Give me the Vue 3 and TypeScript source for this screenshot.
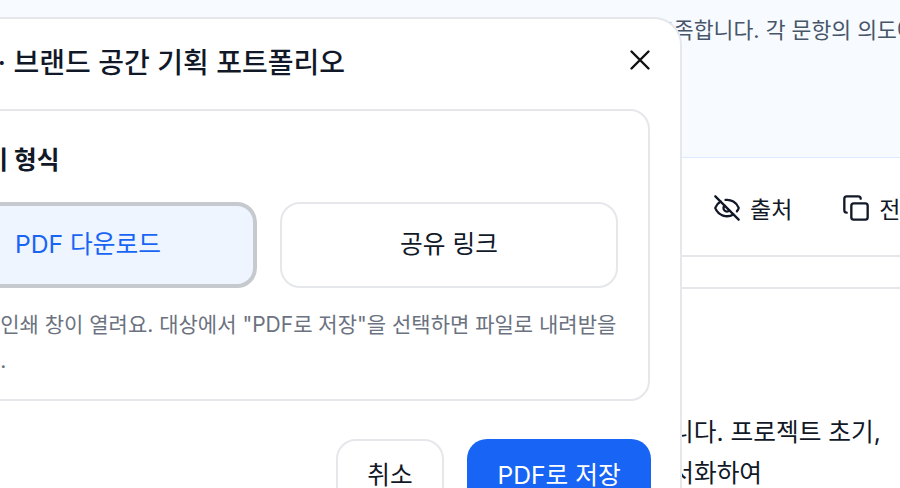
<script setup lang="ts">
const title = '내보내기 · 브랜드 공간 기획 포트폴리오'
const hint = '브라우저 인쇄 창이 열려요. 대상에서 "PDF로 저장"을 선택하면 파일로 내려받을 수 있어요.'
</script>

<template>
  <div class="page">
    <section class="banner">
      <p class="banner-text">충족합니다. 각 문항의 의도에 맞게 작성되었습니다.</p>
    </section>
    <div class="toolbar">
      <button class="tool">
        <svg class="tool-icon" viewBox="0 0 24 24" fill="none" stroke="currentColor" stroke-width="2" stroke-linecap="round" stroke-linejoin="round">
          <path d="M10.733 5.076a10.744 10.744 0 0 1 11.205 6.575 1 1 0 0 1 0 .696 10.747 10.747 0 0 1-1.444 2.49" />
          <path d="M14.084 14.158a3 3 0 0 1-4.242-4.242" />
          <path d="M17.479 17.499a10.75 10.75 0 0 1-15.417-5.151 1 1 0 0 1 0-.696 10.75 10.75 0 0 1 4.446-5.143" />
          <path d="m2 2 20 20" />
        </svg>
        <span>출처</span>
      </button>
      <button class="tool">
        <svg class="tool-icon" viewBox="0 0 24 24" fill="none" stroke="currentColor" stroke-width="2" stroke-linecap="round" stroke-linejoin="round">
          <rect x="8" y="8" width="14" height="14" rx="2" ry="2" />
          <path d="M4 16c-1.100 0-2-.9-2-2V4c0-1.100.9-2 2-2h10c1.100 0 2 .9 2 2" />
        </svg>
        <span>전체 복사</span>
      </button>
    </div>
    <div class="stripe"></div>
    <article class="body-text">
      <p>이 문서는 공간 기획 과정을 정리한 것입니다. 프로젝트 초기,</p>
      <p>브랜드의 핵심 가치를 분석하고, 이를 문서화하여</p>
    </article>

    <div class="modal">
      <header class="modal-head">
        <h2 class="modal-title">{{ title }}</h2>
        <button class="close" aria-label="닫기">
          <svg viewBox="0 0 24 24" fill="none" stroke="currentColor" stroke-width="2.400" stroke-linecap="round">
            <path d="M3.500 3.500l17 17M20.500 3.500l-17 17" />
          </svg>
        </button>
      </header>
      <div class="card">
        <h3 class="card-label">내보내기 형식</h3>
        <div class="choices">
          <button class="choice active">PDF 다운로드</button>
          <button class="choice">공유 링크</button>
        </div>
        <p class="hint">{{ hint }}</p>
      </div>
      <footer class="actions">
        <button class="btn ghost">취소</button>
        <button class="btn primary">PDF로 저장</button>
      </footer>
    </div>
  </div>
</template>

<style>
html,
body {
  margin: 0;
  height: 100%;
  overflow: hidden;
  background: #fff;
}
</style>

<style scoped>
.page {
  position: relative;
  width: 900px;
  height: 488px;
  overflow: hidden;
  font-family: Inter, "Noto Sans CJK KR", sans-serif;
  color: #111827;
}
.banner {
  box-sizing: border-box;
  height: 158px;
  padding: 12px 0 0 654px;
  background: #f7fbff;
  border-bottom: 1px solid #dbeafe;
}
.banner-text {
  margin: 0;
  font-size: 21.6px;
  line-height: 36px;
  color: #475569;
  white-space: nowrap;
}
.toolbar {
  box-sizing: border-box;
  height: 99px;
  display: flex;
  align-items: center;
  gap: 50px;
  padding: 3px 0 0 713px;
  border-bottom: 2px solid #e5e7eb;
  white-space: nowrap;
}
.tool {
  display: flex;
  align-items: center;
  gap: 9px;
  padding: 0;
  border: 0;
  background: none;
  font: inherit;
  font-size: 23px;
  color: #111827;
  flex: none;
}
.tool-icon {
  width: 28px;
  height: 28px;
  flex: none;
}
.stripe {
  box-sizing: border-box;
  height: 32px;
  border-bottom: 2px solid #e5e7eb;
}
.body-text {
  padding: 123px 0 0 266px;
  font-size: 24.7px;
  white-space: nowrap;
}
.body-text p {
  margin: 0;
  line-height: 41px;
}
.modal {
  position: absolute;
  left: -145px;
  top: 17px;
  box-sizing: border-box;
  width: 827px;
  height: 560px;
  padding: 0 30px;
  background: #fff;
  border: 2px solid #e5e7eb;
  border-radius: 28px;
}
.modal-head {
  box-sizing: border-box;
  display: flex;
  align-items: center;
  justify-content: space-between;
  height: 90px;
  padding-bottom: 7px;
}
.modal-title {
  margin: 0;
  font-size: 28px;
  font-weight: 500;
  color: #111827;
  white-space: nowrap;
}
.close {
  width: 24px;
  height: 24px;
  padding: 0;
  margin: -2px -2px 0 0;
  border: 0;
  background: none;
  color: #111;
}
.close svg {
  display: block;
  width: 24px;
  height: 24px;
}
.card {
  box-sizing: border-box;
  height: 292px;
  padding: 31px 30px 0;
  border: 2px solid #e5e7eb;
  border-radius: 20px;
}
.card-label {
  margin: 0 0 24px -2px;
  font-size: 24.7px;
  line-height: 36px;
  font-weight: 600;
  color: #111827;
  white-space: nowrap;
}
.choices {
  display: grid;
  grid-template-columns: 1fr 1fr;
  gap: 23px;
}
.choice {
  box-sizing: border-box;
  height: 86px;
  padding: 0 0 7px;
  border: 2px solid #e5e7eb;
  border-radius: 20px;
  background: #fff;
  font: inherit;
  font-size: 24.7px;
  color: #111827;
}
.choice.active {
  background: #eef5ff;
  color: #1764f5;
  border: 4px solid #c6cacf;
}
.hint {
  margin: 19px -3px 0 -2px;
  font-size: 21px;
  line-height: 36px;
  color: #6b7280;
}
.actions {
  display: flex;
  justify-content: flex-end;
  gap: 23px;
  margin: 38px -1px 0 0;
}
.btn {
  box-sizing: border-box;
  height: 72px;
  padding: 0 0 5px;
  border-radius: 20px;
  font: inherit;
  font-size: 24.7px;
}
.ghost {
  width: 108px;
  border: 2px solid #e5e7eb;
  background: #fff;
  color: #111827;
}
.primary {
  width: 184px;
  border: 0;
  background: #1764f5;
  color: #fff;
}
</style>
